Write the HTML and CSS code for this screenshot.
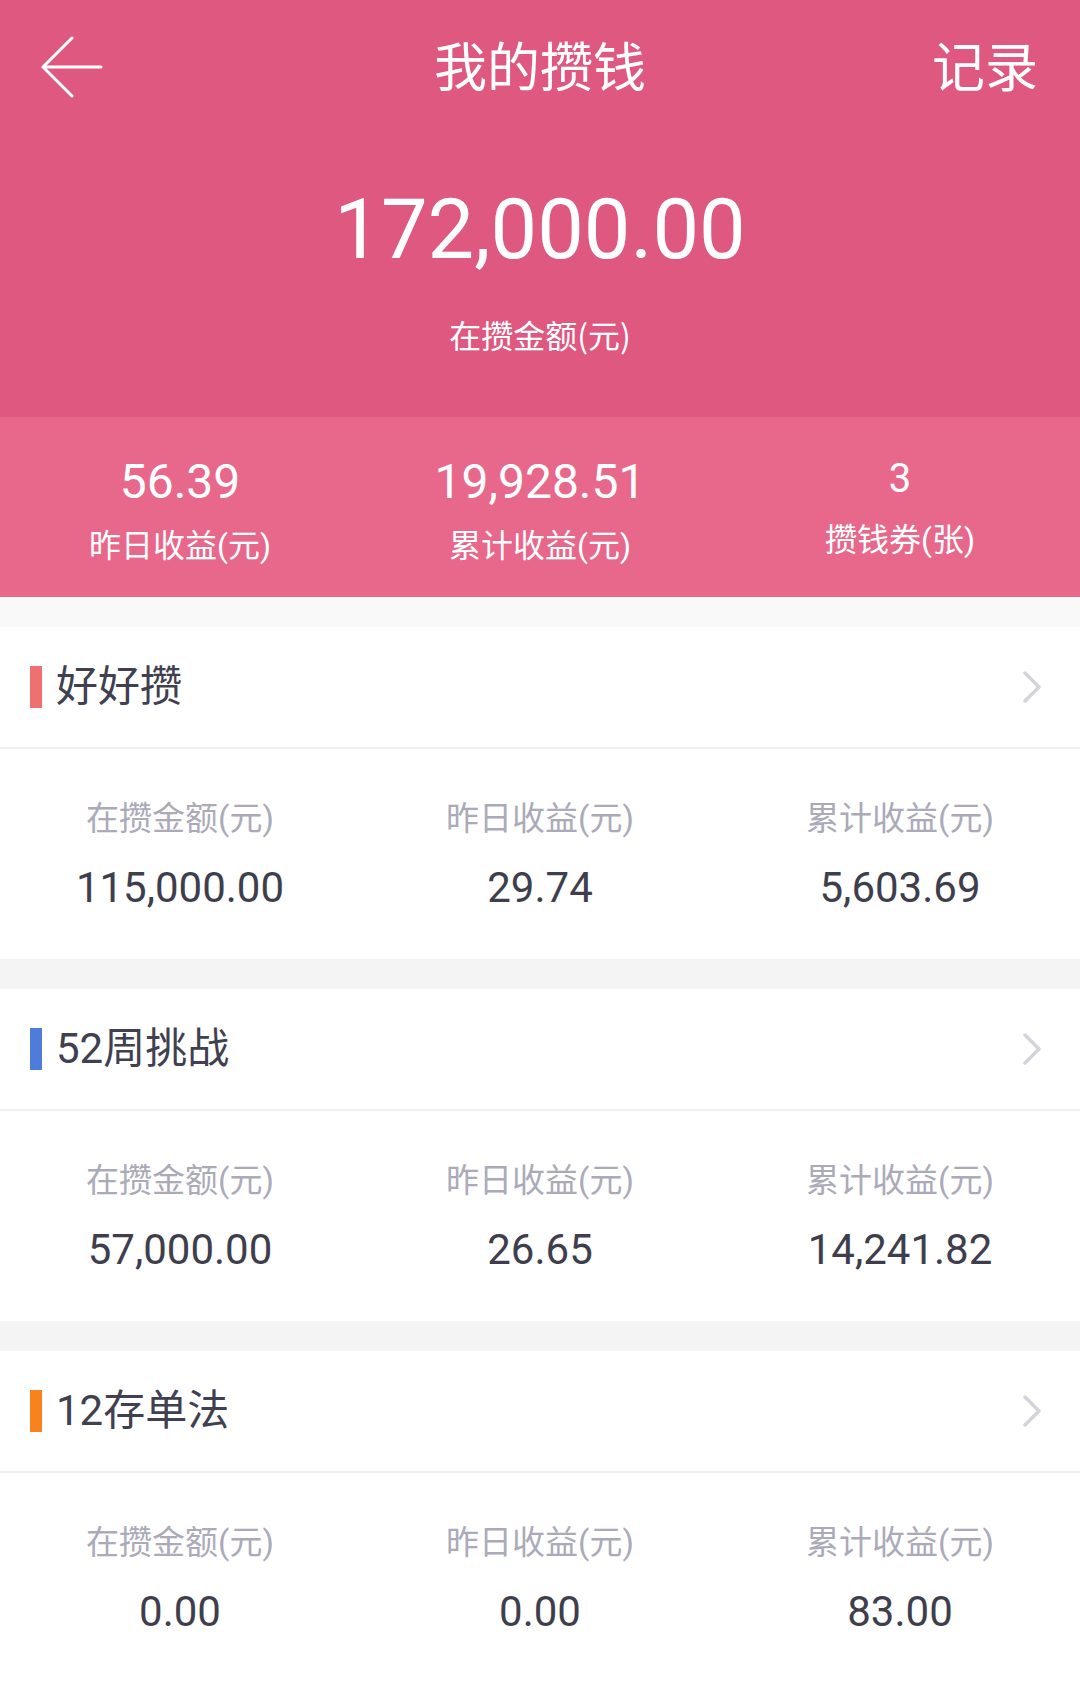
FILE: index.html
```html
<!DOCTYPE html>
<html lang="zh-CN">
<head>
<meta charset="utf-8">
<title>我的攒钱</title>
<link rel="stylesheet" href="styles.css">
</head>
<body>
<div class="page">
  <header class="top">
    <div class="nav">
      <div class="nav-left">
        <svg class="back" width="62" height="62" viewBox="0 0 62 62"><path d="M31 2 L2 31 L31 60 M2 31 H60" fill="none" stroke="#fff" stroke-width="3" stroke-linecap="round" stroke-linejoin="round"/></svg>
      </div>
      <div class="nav-title">我的攒钱</div>
      <div class="nav-right">记录</div>
    </div>
    <div class="total">172,000.00</div>
    <div class="total-label">在攒金额(元)</div>
  </header>

  <section class="band">
    <div class="band-item">
      <div class="band-value">56.39</div>
      <div class="band-label">昨日收益(元)</div>
    </div>
    <div class="band-item">
      <div class="band-value">19,928.51</div>
      <div class="band-label">累计收益(元)</div>
    </div>
    <div class="band-item band-item--small">
      <div class="band-value">3</div>
      <div class="band-label">攒钱券(张)</div>
    </div>
  </section>

  <div class="gap gap--first"></div>

  <section class="card">
    <div class="card-head">
      <span class="mark mark--red"></span>
      <span class="card-title">好好攒</span>
      <svg class="chev" width="18" height="32" viewBox="0 0 18 32"><polyline points="2,2 16,16 2,30" fill="none" stroke="#d3d3db" stroke-width="3.5" stroke-linecap="round" stroke-linejoin="round"/></svg>
    </div>
    <div class="card-stats">
      <div class="stat"><div class="stat-label">在攒金额(元)</div><div class="stat-value">115,000.00</div></div>
      <div class="stat"><div class="stat-label">昨日收益(元)</div><div class="stat-value">29.74</div></div>
      <div class="stat"><div class="stat-label">累计收益(元)</div><div class="stat-value">5,603.69</div></div>
    </div>
  </section>

  <div class="gap"></div>

  <section class="card">
    <div class="card-head">
      <span class="mark mark--blue"></span>
      <span class="card-title">52周挑战</span>
      <svg class="chev" width="18" height="32" viewBox="0 0 18 32"><polyline points="2,2 16,16 2,30" fill="none" stroke="#d3d3db" stroke-width="3.5" stroke-linecap="round" stroke-linejoin="round"/></svg>
    </div>
    <div class="card-stats">
      <div class="stat"><div class="stat-label">在攒金额(元)</div><div class="stat-value">57,000.00</div></div>
      <div class="stat"><div class="stat-label">昨日收益(元)</div><div class="stat-value">26.65</div></div>
      <div class="stat"><div class="stat-label">累计收益(元)</div><div class="stat-value">14,241.82</div></div>
    </div>
  </section>

  <div class="gap"></div>

  <section class="card">
    <div class="card-head">
      <span class="mark mark--orange"></span>
      <span class="card-title">12存单法</span>
      <svg class="chev" width="18" height="32" viewBox="0 0 18 32"><polyline points="2,2 16,16 2,30" fill="none" stroke="#d3d3db" stroke-width="3.5" stroke-linecap="round" stroke-linejoin="round"/></svg>
    </div>
    <div class="card-stats">
      <div class="stat"><div class="stat-label">在攒金额(元)</div><div class="stat-value">0.00</div></div>
      <div class="stat"><div class="stat-label">昨日收益(元)</div><div class="stat-value">0.00</div></div>
      <div class="stat"><div class="stat-label">累计收益(元)</div><div class="stat-value">83.00</div></div>
    </div>
  </section>
</div>
</body>
</html>
```

FILE: styles.css
```css
* { box-sizing: border-box; margin: 0; padding: 0; }
html, body { background: #ffffff; }
body {
  width: 1080px;
  font-family: Roboto, "Noto Sans CJK SC", sans-serif;
  color: #3e3e4c;
}
.page { width: 1080px; }

.top {
  background: #de5880;
  height: 417px;
  color: #ffffff;
  text-align: center;
}
.nav {
  height: 132px;
  display: grid;
  grid-template-columns: 1fr auto 1fr;
  align-items: center;
}
.nav-left {
  display: flex;
  align-items: center;
  padding-left: 41px;
  padding-top: 2px;
}
.back { display: block; }
.nav-title {
  font-family: "Noto Sans CJK SC", sans-serif;
  font-size: 53px;
  line-height: 60px;
  margin-top: -4px;
}
.nav-right {
  font-family: "Noto Sans CJK SC", sans-serif;
  font-size: 53px;
  line-height: 60px;
  text-align: right;
  padding-right: 42px;
  margin-top: -4px;
}
.total {
  margin-top: 48px;
  font-size: 83px;
  line-height: 100px;
  letter-spacing: 0;
}
.total-label {
  margin-top: 34px;
  font-family: "Noto Sans CJK SC", sans-serif;
  font-size: 32px;
  line-height: 40px;
}

.band {
  background: #e8688c;
  height: 180px;
  display: grid;
  grid-template-columns: repeat(3, 1fr);
  color: #ffffff;
  text-align: center;
  padding-top: 37px;
}
.band-value {
  font-size: 48px;
  line-height: 56px;
}
.band-label {
  margin-top: 16px;
  font-family: Roboto, "Noto Sans CJK SC", sans-serif;
  font-size: 32px;
  line-height: 40px;
}
.band-item--small .band-value {
  font-size: 40px;
  line-height: 50px;
}

.gap { height: 30px; background: #f4f4f4; }
.gap--first { height: 30px; background: #f9f9f9; }

.card { background: #ffffff; }
.card-head {
  height: 122px;
  display: flex;
  align-items: center;
  padding-left: 30px;
  padding-right: 39px;
  border-bottom: 2px solid #efeff1;
}
.mark {
  width: 12px;
  height: 42px;
  margin-right: 14px;
}
.mark--red { background: #ee7070; }
.mark--blue { background: #4f7bdb; }
.mark--orange { background: #f7821f; }
.card-title {
  flex: 1;
  font-size: 42px;
  line-height: 50px;
  color: #404050;
}
.chev { display: block; }

.card-stats {
  display: grid;
  grid-template-columns: repeat(3, 1fr);
  text-align: center;
  padding-top: 50px;
  padding-bottom: 46px;
}
.stat-label {
  font-size: 33px;
  line-height: 40px;
  color: #abaab9;
}
.stat-value {
  margin-top: 24px;
  font-size: 42px;
  line-height: 50px;
  color: #3e3e4c;
}
```
